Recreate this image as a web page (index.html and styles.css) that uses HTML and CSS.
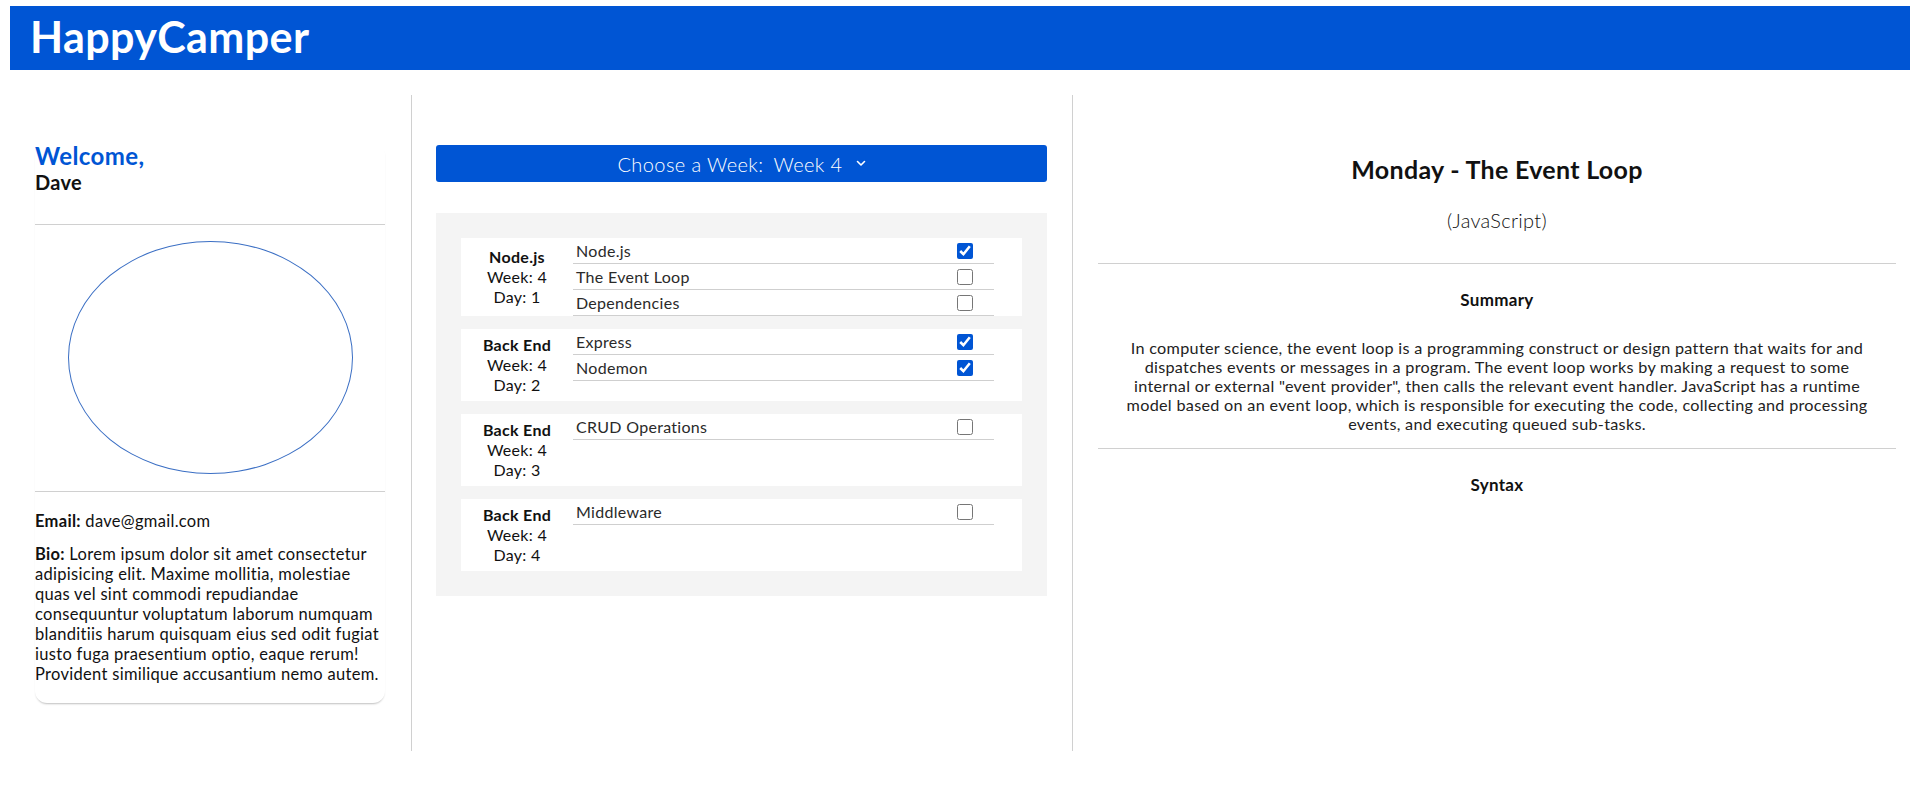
FILE: index.html
```html
<!DOCTYPE html>
<html lang="en">
<head>
    <meta charset="UTF-8">
    <meta name="viewport" content="width=device-width, initial-scale=1.0">
    <title>HappyCamper</title>
    <link rel="stylesheet" href="styles.css">
</head>
<body>
    <div class="page">
        <header class="navbar">
            <h1>HappyCamper</h1>
        </header>

        <main class="dashboard">
            <section class="col profile-col">
                <div class="profile-card">
                    <h2 class="welcome">Welcome,</h2>
                    <h3 class="username">Dave</h3>
                    <hr>
                    <div class="avatar"></div>
                    <hr>
                    <p class="info"><b>Email:</b> dave@gmail.com</p>
                    <p class="info"><b>Bio:</b> Lorem ipsum dolor sit amet consectetur adipisicing elit. Maxime mollitia, molestiae quas vel sint commodi repudiandae consequuntur voluptatum laborum numquam blanditiis harum quisquam eius sed odit fugiat iusto fuga praesentium optio, eaque rerum! Provident similique accusantium nemo autem.</p>
                </div>
            </section>

            <section class="col week-col">
                <div class="week-select">
                    <span>Choose a Week:</span>
                    <span>Week 4</span>
                    <svg class="chevron" width="10" height="7" viewBox="0 0 10 7"><path d="M1.5 1.5 L5 5 L8.5 1.5" fill="none" stroke="#fff" stroke-width="1.6" stroke-linecap="round" stroke-linejoin="round"/></svg>
                </div>

                <div class="week-panel">
                    <div class="day-card">
                        <div class="day-label"><b>Node.js</b><span>Week: 4</span><span>Day: 1</span></div>
                        <ul class="topics">
                            <li><span>Node.js</span><input type="checkbox" checked></li>
                            <li><span>The Event Loop</span><input type="checkbox"></li>
                            <li><span>Dependencies</span><input type="checkbox"></li>
                        </ul>
                    </div>
                    <div class="day-card">
                        <div class="day-label"><b>Back End</b><span>Week: 4</span><span>Day: 2</span></div>
                        <ul class="topics">
                            <li><span>Express</span><input type="checkbox" checked></li>
                            <li><span>Nodemon</span><input type="checkbox" checked></li>
                        </ul>
                    </div>
                    <div class="day-card">
                        <div class="day-label"><b>Back End</b><span>Week: 4</span><span>Day: 3</span></div>
                        <ul class="topics">
                            <li><span>CRUD Operations</span><input type="checkbox"></li>
                        </ul>
                    </div>
                    <div class="day-card">
                        <div class="day-label"><b>Back End</b><span>Week: 4</span><span>Day: 4</span></div>
                        <ul class="topics">
                            <li><span>Middleware</span><input type="checkbox"></li>
                        </ul>
                    </div>
                </div>
            </section>

            <section class="col topic-col">
                <h2 class="topic-title">Monday - The Event Loop</h2>
                <p class="topic-lang">(JavaScript)</p>
                <hr>
                <h4>Summary</h4>
                <p class="summary">In computer science, the event loop is a programming construct or design pattern that waits for and dispatches events or messages in a program. The event loop works by making a request to some internal or external "event provider", then calls the relevant event handler. JavaScript has a runtime model based on an event loop, which is responsible for executing the code, collecting and processing events, and executing queued sub-tasks.</p>
                <hr>
                <h4>Syntax</h4>
            </section>
        </main>
    </div>
</body>
</html>
```

FILE: styles.css
```css
body {
    margin: 0;
    font-family: Lato, "Noto Sans", sans-serif;
    color: #111;
    background: #fff;
}

.page {
    padding: 6px 5px 0 10px;
}

.navbar {
    background: #0055d4;
    height: 64px;
}

.navbar h1 {
    margin: 0;
    padding-left: 20px;
    color: #fff;
    font-size: 43px;
    line-height: 62px;
    font-weight: 700;
    letter-spacing: 0.4px;
}

.dashboard {
    display: flex;
    margin-top: 25px;
}

.col {
    height: 656px;
    box-sizing: border-box;
}

hr {
    border: none;
    border-top: 1px solid #d0d0d0;
    margin: 0;
}

/* left column */
.profile-col {
    width: 402px;
    padding: 48px 26px 0 25px;
    border-right: 1px solid #d0d0d0;
}

.profile-card {
    border-radius: 12px;
    box-shadow: 0 2px 2px -1px rgba(0,0,0,0.25);
    padding-bottom: 19px;
}

.welcome {
    margin: 0;
    color: #0055d4;
    font-size: 24px;
    line-height: 26px;
    letter-spacing: 0.4px;
}

.username {
    margin: 1px 0 0;
    font-size: 20px;
    line-height: 24px;
    letter-spacing: 0.3px;
}

.profile-card hr:first-of-type {
    margin-top: 30px;
}

.avatar {
    width: 283px;
    height: 231px;
    margin: 16px auto 17px;
    border: 1px solid #3b6fc4;
    border-radius: 50%;
}

.info {
    margin: 19px 0 0;
    font-size: 16.5px;
    line-height: 20px;
    letter-spacing: 0.3px;
}

.info + .info {
    margin-top: 13px;
}

/* middle column */
.week-col {
    width: 661px;
    padding: 50px 25px 0 24px;
    border-right: 1px solid #d0d0d0;
}

.week-select {
    display: flex;
    justify-content: center;
    align-items: center;
    gap: 10px;
    height: 37px;
    background: #0055d4;
    border-radius: 3px;
    color: #fff;
    font-size: 20px;
    font-weight: 300;
    letter-spacing: 0.4px;
}

.week-select .chevron {
    margin-left: 3px;
}

.week-panel {
    display: flex;
    flex-direction: column;
    gap: 13px;
    margin-top: 31px;
    padding: 25px;
    background: #f4f4f4;
}

.day-card {
    display: flex;
    background: #fff;
    padding-right: 28px;
}

.day-label {
    width: 112px;
    display: flex;
    flex-direction: column;
    justify-content: center;
    align-items: center;
    padding: 6px 0;
    font-size: 16px;
    line-height: 20px;
    letter-spacing: 0.3px;
}

.topics {
    flex: 1;
    list-style: none;
    margin: 0;
    padding: 0;
    align-self: flex-start;
}

.topics li {
    display: flex;
    justify-content: space-between;
    align-items: center;
    height: 25px;
    padding: 0 21px 0 3px;
    border-bottom: 1px solid #cfcfcf;
    font-size: 16px;
    color: #2a2a2a;
    letter-spacing: 0.3px;
}

.topics input {
    width: 16px;
    height: 16px;
    margin: 0;
    accent-color: #0055d4;
}

/* right column */
.topic-col {
    flex: 1;
    padding: 0 14px 0 25px;
    text-align: center;
}

.topic-title {
    margin: 60px 0 0;
    font-size: 25px;
    line-height: 28px;
    letter-spacing: 0.3px;
}

.topic-lang {
    margin: 25px 0 31px;
    font-size: 20px;
    font-weight: 300;
    line-height: 24px;
    letter-spacing: 0.3px;
}

.topic-col h4 {
    margin: 26px 0 0;
    font-size: 17px;
    line-height: 20px;
    letter-spacing: 0.3px;
}

.summary {
    margin: 28px 18px 15px;
    font-size: 16.2px;
    line-height: 19px;
    color: #222;
    letter-spacing: 0.3px;
}
```
